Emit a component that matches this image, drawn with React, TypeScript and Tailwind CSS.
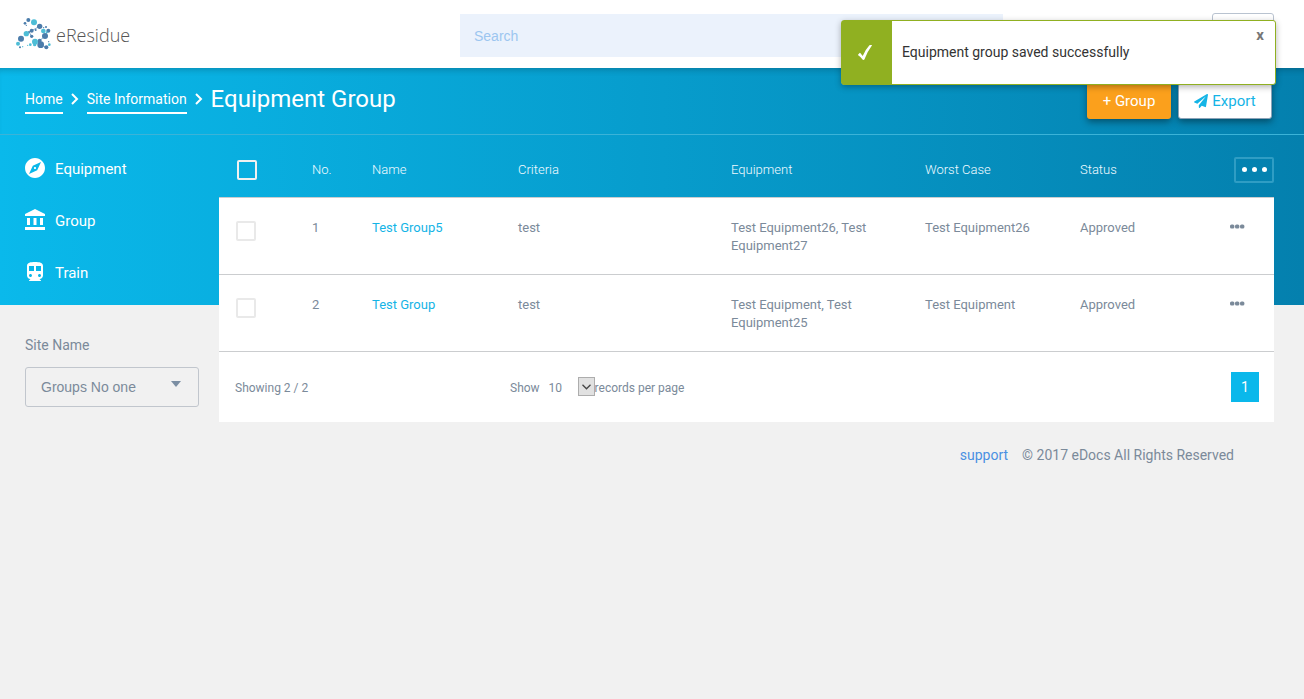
import React from "react";
import {
  MdAccountBalance,
  MdDirectionsSubway,
  MdExplore,
} from "react-icons/md";
import { FaPaperPlane } from "react-icons/fa";

type Group = {
  no: number;
  name: string;
  criteria: string;
  equipment: string;
  worstCase: string;
  status: string;
};

const groups: Group[] = [
  {
    no: 1,
    name: "Test Group5",
    criteria: "test",
    equipment: "Test Equipment26, Test Equipment27",
    worstCase: "Test Equipment26",
    status: "Approved",
  },
  {
    no: 2,
    name: "Test Group",
    criteria: "test",
    equipment: "Test Equipment, Test Equipment25",
    worstCase: "Test Equipment",
    status: "Approved",
  },
];

const navItems = [
  { label: "Equipment", Icon: MdExplore },
  { label: "Group", Icon: MdAccountBalance },
  { label: "Train", Icon: MdDirectionsSubway },
];

const darkDots = [
  [85, 60, 6], [75, 70, 4], [79, 76, 2], [119, 79, 8], [138, 81, 3], [131, 83, 2],
  [145, 92, 6], [135, 108, 9], [95, 92, 6], [87, 96, 3], [95, 109, 5], [107, 90, 3],
  [63, 116, 9], [60, 142, 3], [122, 134, 10], [119, 122, 6], [139, 142, 6], [146, 125, 2],
];
const cyanDots = [
  [102, 67, 9], [130, 93, 7], [79, 101, 8], [54, 131, 6], [105, 125, 9],
  [104, 134, 5], [148, 134, 4], [91, 134, 4], [83, 136, 2], [68, 140, 2], [140, 97, 3],
];

function Logo() {
  return (
    <a href="#" className="flex items-center gap-1 text-[#555]">
      <svg viewBox="45 51 111 102" className="h-[34px] w-[37px]" aria-hidden="true">
        <g stroke="#4b7fb0" strokeWidth="2" fill="none">
          <path d="M79 101 95 92 119 79M87 96 95 109M119 122 135 108 145 92M122 134 139 142" />
        </g>
        <g fill="#4b7cab">
          {darkDots.map(([cx, cy, r]) => (
            <circle key={`${cx}-${cy}`} cx={cx} cy={cy} r={r} />
          ))}
        </g>
        <g fill="#4dbdd6">
          {cyanDots.map(([cx, cy, r]) => (
            <circle key={`${cx}-${cy}`} cx={cx} cy={cy} r={r} />
          ))}
        </g>
      </svg>
      <span className="pt-0.5 font-['Open_Sans','Noto_Sans',sans-serif] text-[18px] font-light leading-6">
        eResidue
      </span>
    </a>
  );
}

function Chevron() {
  return (
    <svg viewBox="0 0 8 12" className="h-3 w-2" fill="none" stroke="white" strokeWidth="2" aria-hidden="true">
      <path d="M1 1l5 5-5 5" />
    </svg>
  );
}

function Dots({ className }: { className: string }) {
  return (
    <svg viewBox="0 0 15 5" className={className} fill="currentColor" aria-hidden="true">
      <rect x="0" y="0.5" width="4.4" height="4" rx="1.6" />
      <rect x="5" y="0.5" width="4.4" height="4" rx="1.6" />
      <rect x="10" y="0.5" width="4.4" height="4" rx="1.6" />
    </svg>
  );
}

function Toast() {
  return (
    <div
      role="status"
      className="absolute right-7 top-5 z-20 flex h-[65px] w-[435px] rounded-[3px] border border-[#90b021] bg-white shadow-[0_2px_6px_rgba(0,0,0,0.3)]"
    >
      <div className="flex w-[50px] items-center justify-center bg-[#90b021] pr-1 text-white">
        <svg viewBox="0 0 16 17" className="h-[17px] w-4" fill="currentColor" aria-hidden="true">
          <path d="M1.200 10.400 2.600 9q.5-.4.9.2L5.700 12Q8.500 5.500 12.400 1.300q.4-.4 1-.4h1.200q.7 0 .3.6Q10.400 7.500 7.500 15.200q-.3.800-1 .8-.8 0-1.200-.7Q3.500 12.500 1.200 11.200q-.4-.4 0-.8Z" />
        </svg>
      </div>
      <p className="flex-1 px-[10px] pt-[21px] text-[14px] leading-5 text-[#333]">
        Equipment group saved successfully
      </p>
      <button
        type="button"
        aria-label="Close"
        className="flex h-7 w-[30px] items-center justify-center text-[15px] font-bold text-[#777]"
      >
        x
      </button>
    </div>
  );
}

export default function App() {
  return (
    <div className="relative min-h-screen bg-[#f1f1f1] font-[Roboto,sans-serif] text-[13px] text-[#7b8a9a]">
      <header className="flex h-[68px] items-start bg-white">
        <div className="w-[460px] pl-[15px] pt-[17px]">
          <Logo />
        </div>
        <input
          type="search"
          aria-label="Search"
          placeholder="Search"
          className="mt-[14px] h-[43px] min-w-0 flex-1 bg-[#ebf2fc] px-[14px] font-['Liberation_Sans',sans-serif] text-[14px] outline-none placeholder:text-[#9cc6f0]"
        />
        <div className="flex w-[301px] justify-end pr-[30px] pt-[13px]">
          <button
            type="button"
            aria-label="Account"
            className="h-10 w-[62px] rounded-[3px] border border-[#b9c3d0] bg-white"
          />
        </div>
      </header>

      <Toast />

      <main className="bg-[linear-gradient(to_right,#0ab9eb,#0480ae)] bg-[length:100%_237px] bg-no-repeat">
        <div className="flex h-[67px] items-center justify-between border-b border-[#3bb3d8] pl-[25px] pr-8 shadow-[inset_0_6px_6px_-4px_rgba(0,0,0,0.2)]">
          <nav aria-label="Breadcrumb" className="flex items-center gap-2 pb-1 text-[14px] text-white">
            <a href="#" className="border-b-2 border-white pb-[3px] pt-[5px] leading-5">Home</a>
            <Chevron />
            <a href="#" className="border-b-2 border-white pb-[3px] pt-[5px] leading-5">Site Information</a>
            <Chevron />
            <h1 className="text-[24px] leading-8">Equipment Group</h1>
          </nav>
          <div className="flex gap-[7px] text-[15px]">
            <button
              type="button"
              className="h-9 w-[84px] rounded-[3px] bg-[#fba01c] text-white shadow-[0_3px_7px_rgba(0,0,0,0.4)]"
            >
              + Group
            </button>
            <button
              type="button"
              className="flex h-9 w-[94px] items-center justify-center gap-1 rounded-[3px] border border-[#8ba3b8] bg-white text-[#14b4e6] shadow-[0_3px_7px_rgba(0,0,0,0.4)]"
            >
              <FaPaperPlane size={14} aria-hidden="true" />
              Export
            </button>
          </div>
        </div>

        <div className="flex pr-[30px]">
          <aside className="w-[219px] shrink-0 pl-[25px] pr-5">
            <nav aria-label="Site" className="flex h-[170px] flex-col pt-[7px]">
              {navItems.map(({ label, Icon }) => (
                <a key={label} href="#" className="flex h-[52px] items-center gap-2 text-[15px] text-white">
                  <span className="flex w-[22px]">
                    <Icon size={24} className="-ml-0.5 shrink-0" aria-hidden="true" />
                  </span>
                  <span className="pt-0.5">{label}</span>
                </a>
              ))}
            </nav>
            <label htmlFor="site-name" className="mt-[30px] block text-[14px] leading-5">
              Site Name
            </label>
            <div className="relative mt-3">
              <select
                id="site-name"
                className="h-10 w-full appearance-none rounded-[3px] border border-[#c1c6cd] bg-transparent px-[15px] font-['Liberation_Sans',sans-serif] text-[14px] outline-none"
              >
                <option>Groups No one</option>
              </select>
              <svg
                viewBox="0 0 10 6"
                className="pointer-events-none absolute right-[18px] top-[14px] h-1.5 w-[10px]"
                fill="#7b8ea3"
                aria-hidden="true"
              >
                <path d="M0 0h10L5 6z" />
              </svg>
            </div>
          </aside>

          <div className="min-w-0 flex-1">
            <table className="w-full table-fixed border-collapse text-left leading-[18px]">
              <colgroup>
                <col className="w-[93px]" />
                <col className="w-[60px]" />
                <col className="w-[146px]" />
                <col className="w-[213px]" />
                <col className="w-[194px]" />
                <col className="w-[155px]" />
                <col className="w-[134px]" />
                <col className="w-[60px]" />
              </colgroup>
              <thead>
                <tr className="h-[62px] text-[#f0faff]">
                  <th className="pl-[18px] pt-2">
                    <input
                      type="checkbox"
                      aria-label="Select all groups"
                      className="block size-5 appearance-none rounded-[2px] border-2 border-[#f1f1f1]"
                    />
                  </th>
                  <th className="pt-2 font-light">No.</th>
                  <th className="pt-2 font-light">Name</th>
                  <th className="pt-2 font-light">Criteria</th>
                  <th className="pt-2 font-light">Equipment</th>
                  <th className="pt-2 font-light">Worst Case</th>
                  <th className="pt-2 font-light">Status</th>
                  <th className="pt-2">
                    <button
                      type="button"
                      aria-label="Choose columns"
                      className="ml-auto flex h-[26px] w-10 items-center justify-center gap-[5px] rounded-[2px] border-2 border-[#2f9dc4]"
                    >
                      <span className="size-[5px] rounded-full bg-white" />
                      <span className="size-[5px] rounded-full bg-white" />
                      <span className="size-[5px] rounded-full bg-white" />
                    </button>
                  </th>
                </tr>
              </thead>
              <tbody>
                {groups.map((group) => (
                  <tr key={group.no} className="h-[77px] border-y border-[#cbcdcf] bg-white align-top">
                    <td className="pl-[17px] pt-[23px]">
                      <input
                        type="checkbox"
                        aria-label={`Select ${group.name}`}
                        className="block size-5 appearance-none rounded-[2px] border-2 border-[#e9e9e9]"
                      />
                    </td>
                    <td className="pt-[21px]">{group.no}</td>
                    <td className="pt-[21px]">
                      <a href="#" className="text-[#14b4e6]">{group.name}</a>
                    </td>
                    <td className="pt-[21px]">{group.criteria}</td>
                    <td className="pr-10 pt-[21px]">{group.equipment}</td>
                    <td className="pt-[21px]">{group.worstCase}</td>
                    <td className="pt-[21px]">{group.status}</td>
                    <td className="pt-[26px]">
                      <button type="button" aria-label={`Actions for ${group.name}`} className="ml-4 block">
                        <Dots className="h-[5px] w-[15px]" />
                      </button>
                    </td>
                  </tr>
                ))}
              </tbody>
            </table>

            <div className="flex h-[70px] items-center bg-white pl-4 pr-[15px] text-[12px]">
              <p className="w-[275px] pt-0.5">Showing 2 / 2</p>
              <div className="flex flex-1 items-center">
                <label htmlFor="page-size" className="pt-0.5">Show</label>
                <span className="relative ml-[9px] flex">
                  <select
                    id="page-size"
                    className="h-[19px] w-[46px] appearance-none bg-transparent pt-0.5 outline-none"
                  >
                    <option>10</option>
                  </select>
                  <span className="pointer-events-none absolute right-0 top-0 flex h-[19px] w-[17px] items-center justify-center border border-[#adadad] bg-[#e1e1e1]">
                    <svg viewBox="0 0 9 6" className="h-1.5 w-[9px]" fill="none" stroke="#444" strokeWidth="1.3" aria-hidden="true">
                      <path d="M.5 .8l4 4 4-4" />
                    </svg>
                  </span>
                </span>
                <span className="pt-0.5">records per page</span>
              </div>
              <button type="button" className="h-[30px] w-7 bg-[#0ab8eb] pt-0.5 text-[14px] text-white">
                1
              </button>
            </div>

            <footer className="flex justify-end gap-[14px] pr-10 pt-[23px] text-[14px] leading-5">
              <a href="#" className="text-[#4a90e2]">support</a>
              <p>© 2017 eDocs All Rights Reserved</p>
            </footer>
          </div>
        </div>
      </main>
    </div>
  );
}
